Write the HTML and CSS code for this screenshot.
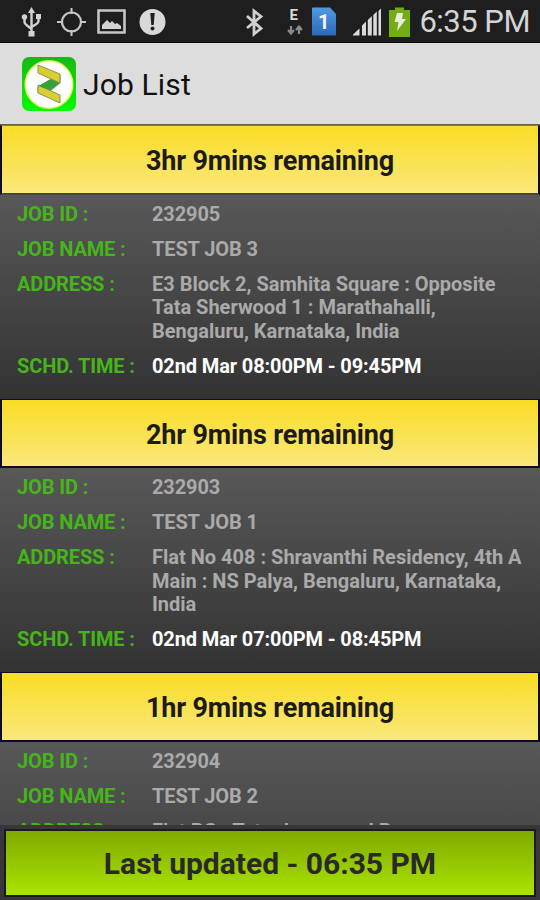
FILE: index.html
```html
<!DOCTYPE html>
<html lang="en">

<head>
    <meta charset="UTF-8">
    <meta name="viewport" content="width=device-width, initial-scale=1.0">
    <title>Job List</title>
    <link rel="stylesheet" href="styles.css">
</head>

<body>
    <!-- status bar -->
    <div class="status-bar">
        <svg class="status-icons" width="400" height="42" viewBox="0 0 400 42">
            <!-- usb -->
            <g fill="none" stroke="#d2d2d2" stroke-width="2.400">
                <path d="M31.500 12v20M24.500 18v4q0 2 2 3l5 4M38.500 17v4q0 2-2 3l-5 3" />
            </g>
            <g fill="#d2d2d2">
                <path d="M31.500 7l3.500 6h-7z" />
                <circle cx="24.500" cy="17" r="2.700" />
                <path d="M36 14h5v5h-5zM28.500 31h6v5.500h-6z" />
            </g>
            <!-- gps -->
            <circle cx="71.500" cy="22" r="9.500" fill="none" stroke="#c6c6c6" stroke-width="2.200" />
            <path d="M71.500 8v6M71.500 30v6M57 22h6M80 22h6" stroke="#c6c6c6" stroke-width="2" />
            <!-- picture -->
            <path d="M98.500 10.500h26v22h-26z" fill="none" stroke="#c6c6c6" stroke-width="2.600" />
            <path d="M102 29v-4l5-5 3 3 2-2 3 3 2-1 4 3v3z" fill="#d2d2d2" />
            <!-- alert -->
            <circle cx="152.500" cy="22" r="13" fill="#d8d8d8" />
            <path d="M150.300 13h4.400l-1 12h-2.400z" fill="#1e1e1e" />
            <circle cx="152.500" cy="28.500" r="2" fill="#1e1e1e" />
            <!-- bluetooth -->
            <path d="M247 16l14 12.500-7 5.500v-23l7 5.500L247 28" fill="none" stroke="#d0d0d0" stroke-width="2.800" />
            <!-- data arrows -->
            <path d="M291 26v7M288 30l3 3.500 3-3.500M299 34v-7M296 30l3-3.500 3 3.500" fill="none" stroke="#8a8a8a" stroke-width="2.200" />
            <text class="edge" x="289.500" y="20">E</text>
            <!-- sim card -->
            <defs>
                <linearGradient id="sim" x1="0" y1="0" x2="0" y2="1">
                    <stop offset="0" stop-color="#4f9be2" />
                    <stop offset="1" stop-color="#2c68b8" />
                </linearGradient>
            </defs>
            <path d="M313 7.500h17l6 6.500v20.500q0 1-1 1h-22q-1 0-1-1v-26q0-1 1-1z" fill="url(#sim)" />
            <text class="sim-number" x="318" y="29">1</text>
            <!-- signal -->
            <g fill="#dadada">
                <path d="M353 35.500v-1l6.500-6v7zM362 25.500l4-4v14h-4zM367.800 20l4-4v19.500h-4zM373.300 15l3.500-3.500v24h-3.500zM378.500 11l2.500-2.500v27h-2.500z" />
            </g>
            <!-- battery -->
            <path d="M395 7.500h9v2.500h6v27h-21v-27h6z" fill="#74ac13" />
            <path d="M397 13h6l-1 6h4l-9 12 1.500-9h-4z" fill="#e6eed9" />
        </svg>
        <span class="clock">6:35 PM</span>
    </div>

    <!-- title bar -->
    <div class="title-bar">
        <svg class="logo" width="54" height="54" viewBox="0 0 54 54">
            <defs>
                <linearGradient id="logo-bg" x1="0" y1="0" x2="0" y2="1">
                    <stop offset="0" stop-color="#18b818" />
                    <stop offset="1" stop-color="#00fb00" />
                </linearGradient>
            </defs>
            <rect width="54" height="54" rx="7" fill="url(#logo-bg)" />
            <circle cx="27" cy="27.500" r="23.800" fill="#fff" stroke="#e9f34e" stroke-width="1.500" />
            <g stroke="#8c8e60" stroke-width="1" stroke-linejoin="round">
                <path d="M38 18v8L28 34l-12 1v-5l13-8z" fill="#36a13b" />
                <path d="M16 8l22 9v9L16 16z" fill="#d8d02f" />
                <path d="M16 28l22 10v8L16 36z" fill="#d8d02f" />
                <path d="M16 29l12-6 9 3-9 7z" fill="#36a13b" stroke="none" />
            </g>
        </svg>
        <h1>Job List</h1>
    </div>

    <!-- jobs -->
    <div class="job-list">
        <div class="job">
            <div class="remaining">3hr 9mins remaining</div>
            <div class="details">
                <div class="label">JOB ID :</div>
                <div class="value">232905</div>
                <div class="label">JOB NAME :</div>
                <div class="value">TEST JOB 3</div>
                <div class="label">ADDRESS :</div>
                <div class="value address">E3 Block 2, Samhita Square : Opposite<br>Tata Sherwood 1 : Marathahalli,<br>Bengaluru, Karnataka, India</div>
                <div class="label">SCHD. TIME :</div>
                <div class="value time">02nd Mar 08:00PM - 09:45PM</div>
            </div>
        </div>

        <div class="job">
            <div class="remaining">2hr 9mins remaining</div>
            <div class="details">
                <div class="label">JOB ID :</div>
                <div class="value">232903</div>
                <div class="label">JOB NAME :</div>
                <div class="value">TEST JOB 1</div>
                <div class="label">ADDRESS :</div>
                <div class="value address">Flat No 408 : Shravanthi Residency, 4th A<br>Main : NS Palya, Bengaluru, Karnataka,<br>India</div>
                <div class="label">SCHD. TIME :</div>
                <div class="value time">02nd Mar 07:00PM - 08:45PM</div>
            </div>
        </div>

        <div class="job">
            <div class="remaining">1hr 9mins remaining</div>
            <div class="details">
                <div class="label">JOB ID :</div>
                <div class="value">232904</div>
                <div class="label">JOB NAME :</div>
                <div class="value">TEST JOB 2</div>
                <div class="label">ADDRESS :</div>
                <div class="value address">Flat BG : Tetra homemad R</div>
            </div>
        </div>
    </div>

    <div class="footer">
        <button class="updated">Last updated - 06:35 PM</button>
    </div>
</body>

</html>
```
FILE: styles.css
```css
* {
    box-sizing: border-box;
}

body {
    margin: 0;
    width: 540px;
    height: 900px;
    display: flex;
    flex-direction: column;
    overflow: hidden;
    background: #333;
    font-family: Roboto, "Liberation Sans", sans-serif;
}

.status-bar {
    height: 43px;
    flex-shrink: 0;
    display: flex;
    justify-content: space-between;
    background: #1e1e1e;
    border-bottom: 1px solid #000;
}

.status-icons {
    overflow: visible;
}

.edge {
    font-size: 15px;
    font-weight: bold;
    fill: #d8d8d8;
}

.sim-number {
    font-size: 20px;
    font-weight: bold;
    fill: #f4f4f4;
}

.clock {
    padding-right: 10px;
    font-size: 31px;
    letter-spacing: -0.5px;
    line-height: 43px;
    color: #d4d4d4;
}

.title-bar {
    height: 81px;
    flex-shrink: 0;
    display: flex;
    align-items: center;
    gap: 7px;
    padding-left: 22px;
    background: #ddd;
}

h1 {
    margin: 0;
    padding-top: 1px;
    font-size: 30px;
    font-weight: normal;
    letter-spacing: 0.15px;
    color: #111;
}

.job-list {
    flex: 1;
    min-height: 0;
    overflow: hidden;
    padding-top: 1px;
    background: #666237;
}

.remaining {
    height: 69.5px;
    border: 2px solid #0b0d27;
    border-top-width: 1px;
    background: linear-gradient(#f9dd24, #fbe77c);
    font-size: 27px;
    font-weight: bold;
    letter-spacing: -0.15px;
    line-height: 71px;
    text-align: center;
    color: #1c1b18;
}

.job:first-child .remaining {
    border-top-color: #8a7a2a;
    border-bottom-color: #45463e;
}

.details {
    height: 204px;
    display: grid;
    grid-template-columns: 135px 1fr;
    align-content: start;
    row-gap: 11.5px;
    padding: 8px 0 0 17px;
    background: linear-gradient(#585858, #333);
    font-size: 20px;
    font-weight: bold;
    letter-spacing: -0.12px;
    line-height: 23.5px;
    white-space: nowrap;
}

.label {
    color: #46b51a;
}

.value {
    color: #aaa;
}

.address {
    letter-spacing: 0;
}

.time {
    color: #fff;
}

.footer {
    height: 75px;
    flex-shrink: 0;
    padding: 4px 4px 3px;
    background: #39363b;
}

.updated {
    display: block;
    width: 100%;
    height: 68px;
    padding: 0;
    border: 2px solid #1c1a20;
    background: linear-gradient(#80a900, #a9e400);
    font-family: inherit;
    font-size: 30px;
    font-weight: bold;
    color: #292929;
}
```
